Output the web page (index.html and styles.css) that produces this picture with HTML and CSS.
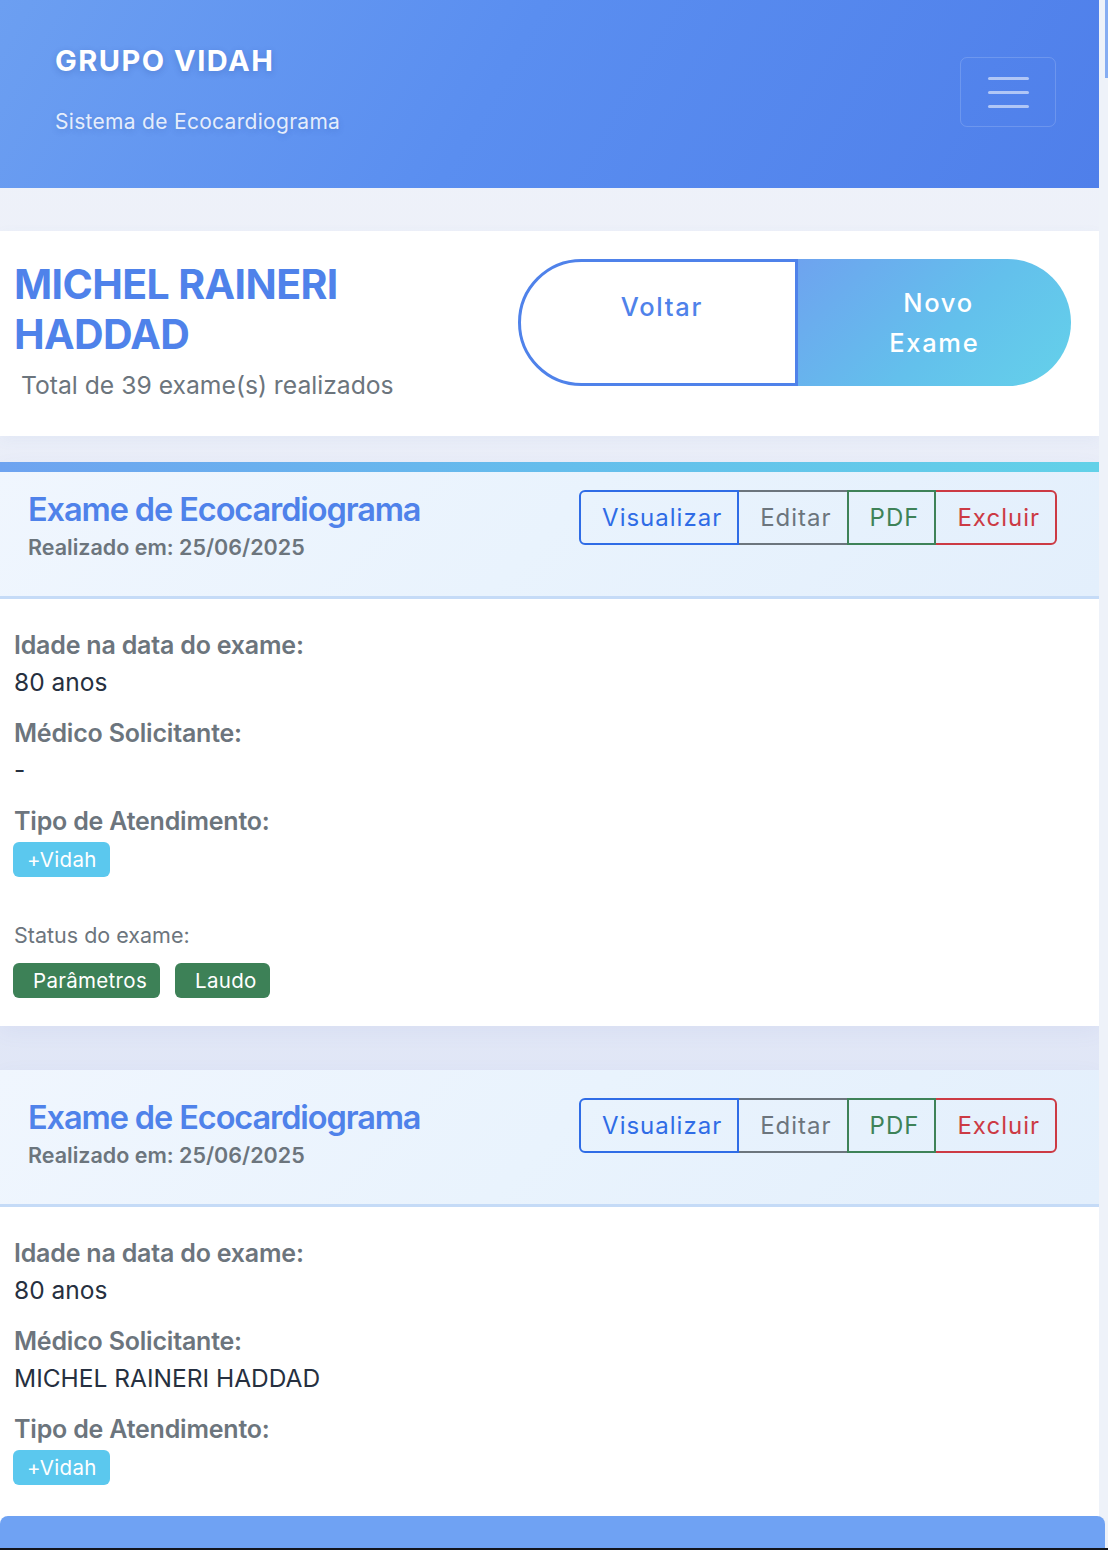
FILE: index.html
```html
<!DOCTYPE html>
<html lang="pt-BR">
<head>
<meta charset="utf-8">
<title>Grupo Vidah - Exames</title>
<link rel="stylesheet" href="styles.css">
</head>
<body>
<header class="topbar">
  <div class="brand">
    <div class="brand-title">GRUPO VIDAH</div>
    <div class="brand-sub">Sistema de Ecocardiograma</div>
  </div>
  <button class="toggler" aria-label="menu">
    <span class="bar"></span><span class="bar"></span><span class="bar"></span>
  </button>
</header>

<main class="content">
  <section class="patient">
    <div class="patient-info">
      <h1 class="patient-name">MICHEL RAINERI HADDAD</h1>
      <p class="patient-total">&nbsp;Total de 39 exame(s) realizados</p>
    </div>
    <div class="patient-actions">
      <a class="pill pill-back">&nbsp;Voltar</a>
      <a class="pill pill-new">&nbsp;Novo<br>Exame</a>
    </div>
  </section>

  <article class="exam exam-active">
    <div class="exam-head">
      <div class="exam-titles">
        <h2 class="exam-title">Exame de Ecocardiograma</h2>
        <div class="exam-date">Realizado em: 25/06/2025</div>
      </div>
      <div class="btn-group">
        <a class="gbtn gbtn-blue">Visualizar</a>
        <a class="gbtn gbtn-gray">Editar</a>
        <a class="gbtn gbtn-green">PDF</a>
        <a class="gbtn gbtn-red">Excluir</a>
      </div>
    </div>
    <div class="exam-body">
      <div class="field"><div class="label">Idade na data do exame:</div><div class="value">80 anos</div></div>
      <div class="field"><div class="label">Médico Solicitante:</div><div class="value">-</div></div>
      <div class="field"><div class="label">Tipo de Atendimento:</div><span class="badge badge-info">+Vidah</span></div>
      <div class="status">
        <div class="status-label">Status do exame:</div>
        <div class="status-badges">
          <span class="badge badge-ok">&nbsp;Parâmetros</span>
          <span class="badge badge-ok">&nbsp;Laudo</span>
        </div>
      </div>
    </div>
  </article>

  <article class="exam">
    <div class="exam-head">
      <div class="exam-titles">
        <h2 class="exam-title">Exame de Ecocardiograma</h2>
        <div class="exam-date">Realizado em: 25/06/2025</div>
      </div>
      <div class="btn-group">
        <a class="gbtn gbtn-blue">Visualizar</a>
        <a class="gbtn gbtn-gray">Editar</a>
        <a class="gbtn gbtn-green">PDF</a>
        <a class="gbtn gbtn-red">Excluir</a>
      </div>
    </div>
    <div class="exam-body exam-body-tall">
      <div class="field"><div class="label">Idade na data do exame:</div><div class="value">80 anos</div></div>
      <div class="field"><div class="label">Médico Solicitante:</div><div class="value">MICHEL RAINERI HADDAD</div></div>
      <div class="field"><div class="label">Tipo de Atendimento:</div><span class="badge badge-info">+Vidah</span></div>
    </div>
  </article>
</main>

<div class="scroll-track"><div class="scroll-thumb"></div></div>
<div class="bottom-bar"></div>
<div class="bottom-line"></div>
</body>
</html>
```

FILE: styles.css
```css
* { box-sizing: border-box; }

html, body { margin: 0; padding: 0; }

body {
  font-family: "Inter", "Noto Sans", sans-serif;
  background: linear-gradient(180deg, #f1f4fa 0px, #e9edf8 500px, #e0e6f6 1100px, #e0e6f6 100%);
  color: #263040;
  width: 1099px;
  overflow: hidden;
}

/* ---------- header ---------- */
.topbar {
  height: 188px;
  display: flex;
  justify-content: space-between;
  align-items: flex-start;
  padding: 43px 43px 0 55px;
  background: linear-gradient(120deg, #6c9ff1 0%, #5a8ef0 45%, #4f7fea 100%);
}

.brand-title {
  color: #fff;
  font-size: 29px;
  line-height: 35px;
  font-weight: 700;
  letter-spacing: 1.5px;
  text-shadow: 0 2px 6px rgba(30, 60, 140, 0.25);
}

.brand-sub {
  margin-top: 28px;
  color: rgba(255, 255, 255, 0.85);
  font-size: 21px;
  line-height: 31px;
  letter-spacing: 0.3px;
  text-shadow: 0 2px 6px rgba(30, 60, 140, 0.2);
}

.toggler {
  margin-top: 14px;
  width: 96px;
  height: 70px;
  border: 1px solid rgba(255, 255, 255, 0.16);
  border-radius: 7px;
  background: transparent;
  display: flex;
  flex-direction: column;
  align-items: center;
  justify-content: center;
  gap: 11px;
  padding: 0;
}

.toggler .bar {
  display: block;
  width: 41px;
  height: 3px;
  border-radius: 2px;
  background: rgba(255, 255, 255, 0.55);
}

/* ---------- content ---------- */
.content {
  padding-top: 43px;
}

.patient {
  background: #fff;
  display: flex;
  justify-content: space-between;
  align-items: flex-start;
  padding: 28px 28px 33px 14px;
  box-shadow: 0 4px 14px rgba(80, 110, 180, 0.05);
}

.patient-info { width: 470px; }

.patient-name {
  margin: 0;
  color: #4f82ea;
  font-size: 41px;
  line-height: 50px;
  font-weight: 700;
  letter-spacing: -0.6px;
}

.patient-total {
  margin: 8px 0 0;
  color: #6c757d;
  font-size: 24.7px;
  line-height: 36px;
}

.patient-actions {
  display: flex;
  width: 553px;
}

.pill {
  flex: 1;
  text-align: center;
  font-size: 25.5px;
  line-height: 40px;
  font-weight: 500;
  letter-spacing: 1.7px;
  text-decoration: none;
}

.pill-back {
  border: 3px solid #4f82ea;
  border-radius: 64px 0 0 64px;
  background: #fff;
  color: #4f82ea;
  padding: 25px 10px 0;
}

.pill-new {
  border-radius: 0 64px 64px 0;
  background: linear-gradient(135deg, #6ea3ef 0%, #63c0ec 55%, #64d1ea 100%);
  color: #fff;
  padding: 24px 10px 23px;
}

/* ---------- exam card ---------- */
.exam {
  position: relative;
  background: #fff;
  margin-top: 28px;
  box-shadow: 0 6px 20px rgba(80, 110, 180, 0.06);
}

.exam + .exam { margin-top: 42px; }

.exam-active { transform: translateY(-2px); }

.exam-active::before {
  content: "";
  position: absolute;
  left: 0;
  right: 0;
  top: 0;
  height: 10px;
  background: linear-gradient(90deg, #6ea3f0 0%, #65bdec 50%, #62d1e8 100%);
}

.exam-head {
  display: flex;
  justify-content: space-between;
  align-items: flex-start;
  padding: 28px 42px 33px 28px;
  background: linear-gradient(135deg, #f0f6fe 0%, #e9f3fd 50%, #e3effc 100%);
  border-bottom: 3px solid #c5dbf7;
}

.exam-title {
  margin: 0;
  color: #4f82ea;
  font-size: 32.5px;
  line-height: 40px;
  font-weight: 600;
  letter-spacing: -1.1px;
}

.exam-date {
  margin-top: 2px;
  color: #6c757d;
  font-size: 21.5px;
  line-height: 31px;
  font-weight: 600;
}

.btn-group {
  display: flex;
}

.gbtn {
  font-size: 24px;
  line-height: 36px;
  letter-spacing: 1px;
  padding: 7.5px 15px 7.5px 21px;
  border: 2px solid;
  text-decoration: none;
  background: transparent;
}

.gbtn + .gbtn { margin-left: -2px; }

.gbtn-blue { color: #2f6ce6; border-color: #2f6ce6; border-radius: 6px 0 0 6px; position: relative; z-index: 1; }
.gbtn-gray { color: #6c757d; border-color: #6c757d; }
.gbtn-green { color: #3e8258; border-color: #3e8258; position: relative; z-index: 1; }
.gbtn-red { color: #cc3a44; border-color: #cc3a44; border-radius: 0 6px 6px 0; }

.exam-body {
  padding: 28px 14px 28px 13px;
}

.exam-body-tall { padding-bottom: 60px; }

.field { margin-bottom: 15px; }

.label {
  color: #6c757d;
  font-size: 25px;
  line-height: 36px;
  font-weight: 600;
  letter-spacing: -0.2px;
  margin-bottom: 1px;
  padding-left: 1px;
}

.value {
  color: #263040;
  font-size: 24.5px;
  line-height: 36px;
  padding-left: 1px;
}

.badge {
  display: inline-block;
  color: #fff;
  font-size: 20.5px;
  line-height: 25px;
  padding: 5px 13px 5px 14px;
  border-radius: 6px;
  letter-spacing: 0.3px;
}

.field .badge { margin-top: 2px; }

.badge-info { background: #5bc8ee; }
.badge-ok { background: #3d8157; }

.status { margin-top: 43px; }

.status-label {
  color: #6c757d;
  font-size: 21.5px;
  line-height: 31px;
  padding-left: 1px;
}

.status-badges {
  margin-top: 12px;
  display: flex;
  gap: 15px;
}

/* ---------- overlays ---------- */
.scroll-track {
  position: fixed;
  top: 0;
  right: 0;
  width: 9px;
  height: 1548px;
  background: #eef2f9;
}

.scroll-thumb {
  margin-left: 6px;
  width: 3px;
  height: 78px;
  background: #86adf2;
}

.bottom-bar {
  position: fixed;
  left: 0;
  bottom: 2px;
  width: 1105px;
  height: 32px;
  background: #6fa2f3;
  border-radius: 8px 8px 0 0;
}

.bottom-line {
  position: fixed;
  left: 0;
  right: 0;
  bottom: 0;
  height: 2px;
  background: #12151c;
}
```
